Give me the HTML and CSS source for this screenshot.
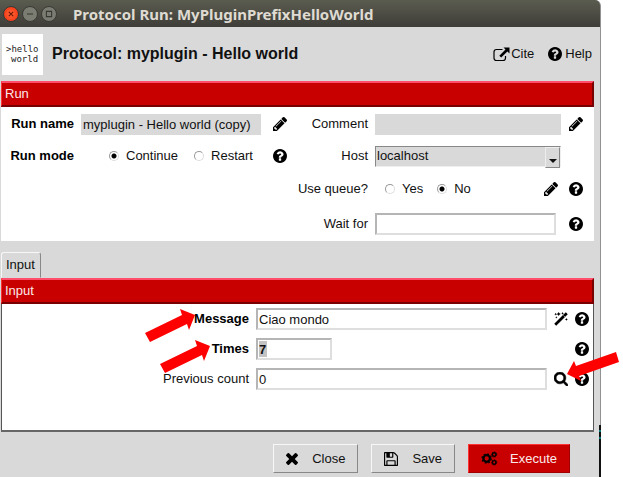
FILE: index.html
```html
<!DOCTYPE html>
<html lang="en">
<head>
<meta charset="utf-8">
<title>Protocol Run: MyPluginPrefixHelloWorld</title>
<link rel="stylesheet" href="styles.css">
</head>
<body>
<svg class="defs" aria-hidden="true">
  <symbol id="help" viewBox="128 128 1536 1536"><path d="M1024 1376v-192q0-14-9-23t-23-9h-192q-14 0-23 9t-9 23v192q0 14 9 23t23 9h192q14 0 23-9t9-23zm256-672q0-88-55.5-163t-138.5-116-170-41q-243 0-371 213-15 24 8 42l132 100q7 6 19 6 16 0 25-12 53-68 86-92 34-24 86-24 48 0 85.5 26t37.5 59q0 38-20 61t-68 45q-63 28-115.5 86.5t-52.5 125.5v36q0 14 9 23t23 9h192q14 0 23-9t9-23q0-19 21.5-49.5t54.5-49.5q32-18 49-28.5t46-35 44.5-48 28-60.5 12.5-81zm384 192q0 209-103 385.5t-279.5 279.5-385.5 103-385.5-103-279.5-279.5-103-385.5 103-385.5 279.5-279.5 385.5-103 385.5 103 279.5 279.5 103 385.5z"/></symbol>
  <symbol id="pencil" viewBox="128 149 1515 1515"><path d="M491 1536l91-91-235-235-91 91v107h128v128h107zm523-928q0-22-22-22-10 0-17 7l-542 542q-7 7-7 17 0 22 22 22 10 0 17-7l542-542q7-7 7-17zm-54-192l416 416-832 832h-416v-416zm683 96q0 53-37 90l-166 166-416-416 166-165q36-38 90-38 53 0 91 38l235 234q37 39 37 91z"/></symbol>
  <symbol id="search" viewBox="64 128 1664 1664"><path stroke="currentColor" stroke-width="60" d="M1216 832q0-185-131.5-316.5t-316.5-131.5-316.5 131.5-131.5 316.5 131.5 316.5 316.5 131.5 316.5-131.5 131.5-316.5zm512 832q0 52-38 90t-90 38q-54 0-90-38l-343-342q-179 124-399 124-143 0-273.5-55.5t-225-150-150-225-55.5-273.5 55.5-273.5 150-225 225-150 273.5-55.5 273.5 55.5 225 150 150 225 55.5 273.5q0 220-124 399l343 343q37 37 37 90z"/></symbol>
  <symbol id="times" viewBox="302 366 1188 1188"><path d="M1490 1322q0 40-28 68l-136 136q-28 28-68 28t-68-28l-294-294-294 294q-28 28-68 28t-68-28l-136-136q-28-28-28-68t28-68l294-294-294-294q-28-28-28-68t28-68l136-136q28-28 68-28t68 28l294 294 294-294q28-28 68-28t68 28l136 136q28 28 28 68t-28 68l-294 294 294 294q28 28 28 68z"/></symbol>
  <symbol id="floppy" viewBox="128 128 1536 1536"><path d="M512 1536h768v-384h-768v384zm896 0h128v-896q0-14-10-38.5t-20-34.5l-281-281q-10-10-34-20t-39-10v416q0 40-28 68t-68 28h-576q-40 0-68-28t-28-68v-416h-128v1280h128v-416q0-40 28-68t68-28h832q40 0 68 28t28 68v416zm-384-928v-320q0-13-9.5-22.5t-22.5-9.5h-192q-13 0-22.5 9.5t-9.5 22.5v320q0 13 9.5 22.5t22.5 9.5h192q13 0 22.5-9.5t9.5-22.5zm640 32v928q0 40-28 68t-68 28h-1344q-40 0-68-28t-28-68v-1344q0-40 28-68t68-28h928q40 0 88 20t76 48l280 280q28 28 48 76t20 88z"/></symbol>
  <symbol id="wand" viewBox="0 0 15 15"><path d="M1.300 13.700L13.700 1.300" fill="none" stroke="currentColor" stroke-width="3"/><path d="M10.200 3.800L12 5.600" stroke="#fff" stroke-width=".6"/><path d="M5 0l.8 1.400L7.200 2.200l-1.400.8L5 4.400l-.8-1.400-1.400-.8 1.400-.8zM9.200 0l.5 1 1 .5-1 .5-.5 1-.5-1-1-.5 1-.5zM1.800 .800l.5 1 1 .5-1 .5-.5 1-.5-1-1-.5 1-.5zM2.500 4.500l.4.8.8.4-.8.4-.4.8-.4-.8-.8-.4.8-.4zM13.300 6.500l.5 1 1 .5-1 .5-.5 1-.5-1-1-.5 1-.5z"/></symbol>
  <symbol id="external" viewBox="0 0 17 14"><path d="M9.500 2H3.500Q1 2 1 4.500v6Q1 13 3.500 13h6.500q2.500 0 2.500-2.500V8.500" fill="none" stroke="currentColor" stroke-width="1.200"/><path d="M10.500 0H16.500V6L14.400 3.900 8.200 10.100 6.300 8.200 12.500 2z"/></symbol>
  <symbol id="cogs" viewBox="0 0 17 16">
    <circle cx="5.500" cy="8" r="3.500" fill="none" stroke="currentColor" stroke-width="2.400"/>
    <circle cx="5.500" cy="8" r="5" fill="none" stroke="currentColor" stroke-width="1.300" stroke-dasharray="2 1.927"/>
    <circle cx="13.500" cy="3.800" r="1.900" fill="none" stroke="currentColor" stroke-width="1.500"/>
    <circle cx="13.500" cy="3.800" r="2.800" fill="none" stroke="currentColor" stroke-width="1" stroke-dasharray="1.300 1.213"/>
    <circle cx="13.500" cy="12.200" r="1.900" fill="none" stroke="currentColor" stroke-width="1.500"/>
    <circle cx="13.500" cy="12.200" r="2.800" fill="none" stroke="currentColor" stroke-width="1" stroke-dasharray="1.300 1.213"/>
  </symbol>
</svg>

<main class="window">
  <header class="titlebar">
    <button class="wm wm-close" type="button" aria-label="Close window"><svg viewBox="0 0 16 16"><path d="M5.500 5.500l5 5m0-5l-5 5"/></svg></button>
    <button class="wm" type="button" aria-label="Minimize"><svg viewBox="0 0 16 16"><path d="M4.500 8h7"/></svg></button>
    <button class="wm" type="button" aria-label="Maximize"><svg viewBox="0 0 16 16"><path d="M5 5h6v6H5z"/></svg></button>
    <span class="window-title">Protocol Run: MyPluginPrefixHelloWorld</span>
  </header>

  <div class="heading">
    <div class="logo"><span>&gt;hello</span><span class="logo-second">world</span></div>
    <h1>Protocol: myplugin - Hello world</h1>
    <nav class="links">
      <a href="#cite"><svg class="icon-wide"><use href="#external"/></svg>Cite</a>
      <a href="#help-page"><svg class="icon"><use href="#help"/></svg><span class="help-text">Help</span></a>
    </nav>
  </div>

  <section class="panel">
    <h2>Run</h2>
    <div class="run-body">
      <div class="run-left">
        <label class="strong" for="run-name">Run name</label>
        <input class="flat" id="run-name" type="text" value="myplugin - Hello world (copy)">
        <button class="icon-button" type="button" aria-label="Edit run name"><svg class="icon"><use href="#pencil"/></svg></button>
        <span class="strong" id="mode-label">Run mode</span>
        <div class="radios mode" role="radiogroup" aria-labelledby="mode-label">
          <label><input type="radio" name="mode" checked>Continue</label>
          <label><input type="radio" name="mode">Restart</label>
        </div>
        <button class="icon-button" type="button" aria-label="Run mode help"><svg class="icon"><use href="#help"/></svg></button>
      </div>
      <div class="run-right">
        <div class="row">
          <label for="comment">Comment</label>
          <input class="flat" id="comment" type="text">
          <button class="icon-button" type="button" aria-label="Edit comment"><svg class="icon"><use href="#pencil"/></svg></button>
        </div>
        <div class="row">
          <label for="host">Host</label>
          <div class="select"><select id="host"><option>localhost</option></select></div>
          <span class="icon-space"></span>
        </div>
        <div class="row">
          <span class="row-label" id="queue-label">Use queue?</span>
          <div class="radios queue" role="radiogroup" aria-labelledby="queue-label">
            <label><input type="radio" name="queue">Yes</label>
            <label><input type="radio" name="queue" checked>No</label>
          </div>
          <button class="icon-button" type="button" aria-label="Edit queue"><svg class="icon"><use href="#pencil"/></svg></button>
          <button class="icon-button" type="button" aria-label="Queue help"><svg class="icon"><use href="#help"/></svg></button>
        </div>
        <div class="row row-wait">
          <label for="wait">Wait for</label>
          <input class="sunken" id="wait" type="text">
          <button class="icon-button" type="button" aria-label="Wait for help"><svg class="icon"><use href="#help"/></svg></button>
        </div>
      </div>
    </div>
  </section>

  <div class="tabs" role="tablist"><button type="button" role="tab" aria-selected="true">Input</button></div>

  <section class="panel panel-input">
    <h2>Input</h2>
    <div class="params">
      <label class="strong" for="message">Message</label>
      <input class="sunken" id="message" type="text" value="Ciao mondo">
      <button class="icon-button" type="button" aria-label="Message wizard"><svg class="icon"><use href="#wand"/></svg></button>
      <button class="icon-button" type="button" aria-label="Message help"><svg class="icon"><use href="#help"/></svg></button>

      <label class="strong" for="times-field">Times</label>
      <input class="sunken short" id="times-field" type="text" value="7">
      <span></span>
      <button class="icon-button" type="button" aria-label="Times help"><svg class="icon"><use href="#help"/></svg></button>

      <label for="previous">Previous count</label>
      <input class="sunken" id="previous" type="text" value="0">
      <button class="icon-button" type="button" aria-label="Search previous count"><svg class="icon"><use href="#search"/></svg></button>
      <button class="icon-button" type="button" aria-label="Previous count help"><svg class="icon"><use href="#help"/></svg></button>
      <svg class="arrow arrow-message" viewBox="0 0 51 34"><path d="M50 6L35 0l2 6L0 24l5 9 37-18 2 6z"/></svg>
      <svg class="arrow arrow-times" viewBox="0 0 51 34"><path d="M50 6L35 0l2 6L0 24l5 9 37-18 2 6z"/></svg>
      <svg class="arrow arrow-search" viewBox="0 0 52 30"><path d="M0 22L7 9l2 5L49 0l3 10L12 24l2 5z"/></svg>
    </div>
  </section>

  <footer class="actions">
    <button class="action" type="button"><svg class="icon-small"><use href="#times"/></svg>Close</button>
    <button class="action" type="button"><svg class="icon"><use href="#floppy"/></svg>Save</button>
    <button class="action execute" type="button"><svg class="icon-wide"><use href="#cogs"/></svg>Execute</button>
  </footer>
</main>
</body>
</html>
```

FILE: styles.css
```css
* { box-sizing: border-box; }

body {
  margin: 0;
  background: #fff;
  color: #111;
  font: 13px/16px "Liberation Sans", Arial, sans-serif;
}

input, select, button { font: inherit; color: inherit; }
button { padding: 0; border: 0; background: none; }
svg { display: block; flex: none; fill: currentColor; }
.defs { position: absolute; width: 0; height: 0; }
.icon { width: 14px; height: 14px; color: #000; overflow: visible; }
.icon-small { width: 12px; height: 12px; color: #000; }
.icon-wide { width: 17px; height: 15px; color: #000; }

.window {
  position: relative;
  min-height: 100vh;
  margin-right: 22px;
  border-right: 1px solid #929292;
  border-top-right-radius: 6px;
  background: #d9d9d9;
}
.window::after {
  content: "";
  position: absolute;
  right: -1px;
  bottom: 0;
  width: 2px;
  height: 52px;
  background: linear-gradient(#111 5px, #087878 5px 7px, #111 7px 12px, #087878 12px 14px, #111 14px);
}

.titlebar {
  display: flex;
  align-items: center;
  gap: 3px;
  height: 27px;
  padding-left: 3px;
  border-top-right-radius: 5px;
  background: linear-gradient(#5b5c50, #3e3d38);
}
.wm {
  width: 16px;
  height: 16px;
  border: 1px solid #3a3a35;
  border-radius: 50%;
  background: #7b7c72;
  color: #373832;
}
.wm svg { width: 14px; height: 14px; fill: none; stroke: currentColor; stroke-width: 1.2; }
.wm-close { background: radial-gradient(#ff6738, #f12c0c); color: #6a1404; }
.window-title {
  margin-left: 13px;
  color: #dfdbd2;
  font: bold 15px/20px "Noto Sans", sans-serif;
}

.heading { display: flex; align-items: center; height: 54px; padding: 0 8px 0 2px; }
.logo {
  display: flex;
  flex-direction: column;
  justify-content: center;
  width: 41px;
  height: 41px;
  padding-left: 4px;
  background: #fff;
  color: #222;
  font: 9px/10px "DejaVu Sans Mono", monospace;
}
.logo-second { padding-left: 5px; }
h1 { margin: 0 auto 0 9px; font-size: 16px; line-height: 20px; }
.links { display: flex; gap: 14px; }
.links a { display: flex; align-items: center; color: inherit; text-decoration: none; }
.links .icon-wide { margin-right: 1px; }
.help-text { margin-left: 3px; }

.panel { margin: 0 6px 0 1px; background: #fff; }
h2 {
  height: 26px;
  margin: 0;
  padding: 3px 3px;
  border: 2px solid;
  border-color: #ff4d6b #780000 #780000 #f33;
  border-left-width: 1px;
  background: #c80000;
  color: #fbe9e9;
  font-size: 13px;
  line-height: 16px;
  font-weight: normal;
}

.run-body { display: flex; padding: 1px 10px 0 0; }
.run-left {
  display: grid;
  grid-template-columns: 73px 180px 24px;
  grid-auto-rows: 32px;
  align-content: start;
  align-items: center;
  column-gap: 7px;
}
.run-left > .strong { text-align: right; }
.strong { font-weight: bold; color: #000; }
.run-right {
  display: grid;
  flex: 1;
  grid-template-rows: 32px 32px 34px 35px;
  min-width: 0;
}
.row { display: flex; align-items: center; gap: 7px; }
.row > label, .row-label { flex: none; width: 76px; text-align: right; }
.row > input, .select, .row > .radios { flex: 1; min-width: 0; }
.row-wait { gap: 12px; }
.row-wait > label { margin-right: -5px; }

input[type="text"] {
  width: 100%;
  height: 22px;
  padding: 0 2px;
  border: 0;
  border-radius: 0;
}
input.flat { height: 21px; background: #d9d9d9; }
input.sunken {
  border: 2px solid;
  border-color: #b5b5b5 #dedede #dedede #b5b5b5;
  background: #fff;
  padding: 0 1px;
}
input.short { width: 76px; }

.select { position: relative; }
.select select {
  display: block;
  appearance: none;
  width: 100%;
  height: 21px;
  padding: 0 1px;
  border: 1px solid;
  border-color: #888 #eee #eee #888;
  border-radius: 0;
  background: #d9d9d9;
}
.select::after {
  content: "";
  position: absolute;
  top: 1px;
  right: 1px;
  width: 13px;
  height: 19px;
  border: 1px solid;
  border-color: #eee #888 #888 #eee;
  background: #d9d9d9;
  pointer-events: none;
}
.select::before {
  content: "";
  position: absolute;
  z-index: 1;
  top: 13px;
  right: 4px;
  border: solid transparent;
  border-width: 4px 4px 0;
  border-top-color: #111;
  pointer-events: none;
}

.radios { display: flex; }
.radios label { display: flex; align-items: center; gap: 7px; }
.mode { gap: 16px; padding-left: 28px; }
.queue { gap: 14px; padding-left: 10px; }
input[type="radio"] {
  appearance: none;
  width: 10px;
  height: 10px;
  margin: 0;
  border: 1px solid;
  border-color: #999 #ddd #ddd #999;
  border-radius: 50%;
  background: #fff;
}
input[type="radio"]:checked { background: radial-gradient(circle, #000 2px, #fff 3px); }

.icon-button { display: flex; align-items: center; justify-content: center; }
.row .icon-button, .icon-space { flex: none; width: 16px; }
.row .icon-button + .icon-button { margin-left: 2px; }

.tabs { display: flex; padding: 11px 0 0 1px; }
.tabs button {
  height: 26px;
  padding: 0 5px 0 4px;
  border: 1px solid;
  border-color: #f7f7f7 #888 transparent #f7f7f7;
  border-radius: 3px 3px 0 0;
}

.panel-input { border-bottom: 2px solid #666; }
.params {
  position: relative;
  display: grid;
  grid-template-columns: 247px 1fr 14px 14px;
  grid-auto-rows: 30px;
  align-items: center;
  column-gap: 7px;
  min-height: 126px;
  padding-right: 4px;
  border: solid #555;
  border-width: 0 1px;
}
.params > label { text-align: right; }
#times-field {
  background: linear-gradient(#c3c3c3, #c3c3c3) 1px 1px / 8px 16px no-repeat, #fff;
  font-weight: bold;
}

.arrow { position: absolute; fill: #f00; }
.arrow-message, .arrow-times { width: 51px; height: 34px; }
.arrow-message { top: 5px; left: 143px; }
.arrow-times { top: 36px; left: 158px; }
.arrow-search { top: 57px; right: -26px; width: 52px; height: 30px; }
.arrow-search { top: 48px; }

.actions { display: flex; justify-content: flex-end; gap: 13px; padding: 12px 30px 4px 0; }
.action {
  display: flex;
  align-items: center;
  gap: 14px;
  height: 29px;
  padding: 0 12px;
  border: 1px solid;
  border-color: #f7f7f7 #888 #888 #f7f7f7;
}
.execute { gap: 12px; border-color: #f33 #a00000 #a00000 #f33; background: #c80000; color: #fbe9e9; }
```
